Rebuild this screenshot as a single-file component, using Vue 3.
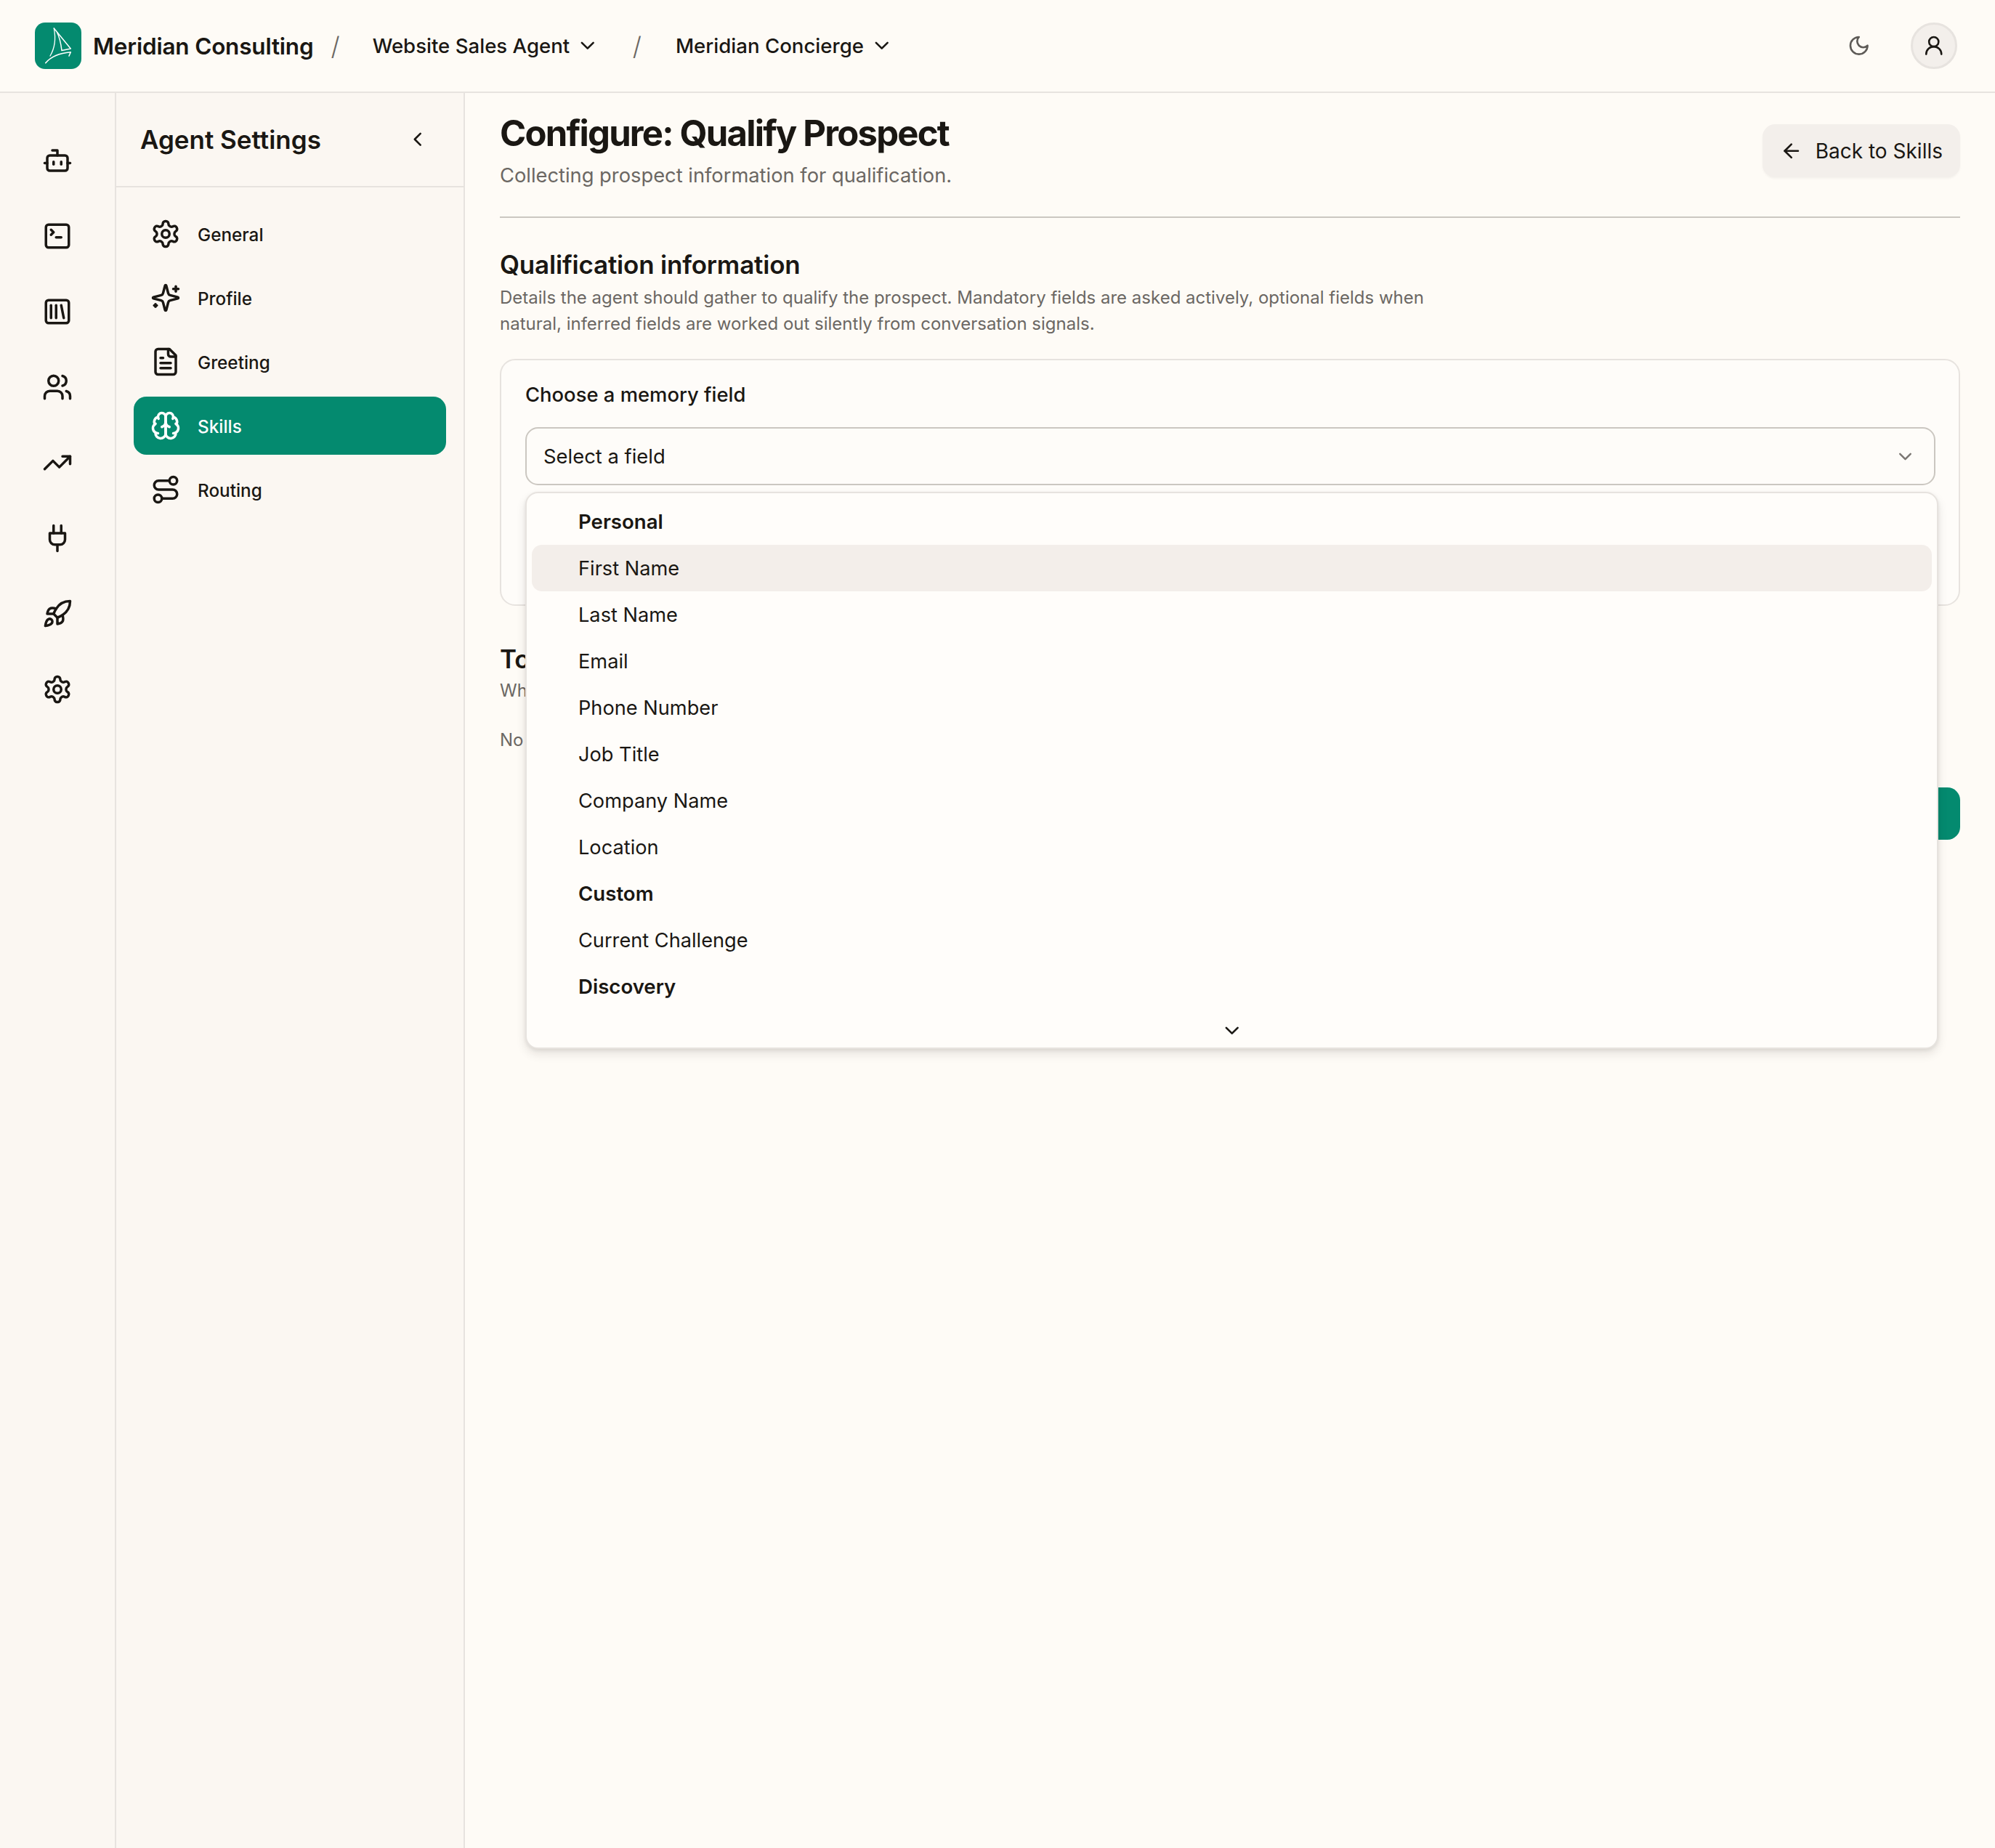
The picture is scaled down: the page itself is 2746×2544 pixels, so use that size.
<template>
  <div class="page">
    <header class="topbar">
      <div class="logo">
        <svg viewBox="0 0 64 64" width="64" height="64" stroke-linecap="round" stroke-linejoin="round">
          <path d="M26.3 8 C29 22 27 36 21 46" stroke-width="1.3" />
          <path d="M26.3 8 L49.3 36 L37 38.5 C36 30 34 20 30 12.5" stroke-width="1.5" />
          <path d="M14.7 55.7 C22 47 34 42 49.3 40.7 L47 46" stroke-width="1.6" />
        </svg>
      </div>
      <span class="brand">Meridian Consulting</span>
      <span class="slash">/</span>
      <button class="crumb">
        Website Sales Agent
        <svg class="chev" viewBox="0 0 24 24"><path d="m6 9 6 6 6-6" /></svg>
      </button>
      <span class="slash second">/</span>
      <button class="crumb">
        Meridian Concierge
        <svg class="chev" viewBox="0 0 24 24"><path d="m6 9 6 6 6-6" /></svg>
      </button>
      <div class="top-right">
        <svg class="moon" viewBox="0 0 24 24"><path d="M12 3a6 6 0 0 0 9 9 9 9 0 1 1-9-9Z" /></svg>
        <div class="avatar">
          <svg viewBox="0 0 24 24"><circle cx="12" cy="8" r="5" /><path d="M20 21a8 8 0 0 0-16 0" /></svg>
        </div>
      </div>
    </header>

    <div class="body">
      <nav class="rail">
        <div v-for="icon in railIcons" :key="icon.name" class="rail-item">
          <svg class="icon" viewBox="0 0 24 24">
            <circle v-for="c in icon.circles" :key="c.join()" :cx="c[0]" :cy="c[1]" :r="c[2]" />
            <rect v-for="r in icon.rects" :key="r.join()" :x="r[0]" :y="r[1]" :width="r[2]" :height="r[3]" rx="2" />
            <path v-for="d in icon.paths" :key="d" :d="d" />
          </svg>
        </div>
      </nav>

      <aside class="sidebar">
        <div class="sidebar-head">
          <h2>Agent Settings</h2>
          <svg class="collapse" viewBox="0 0 24 24"><path d="m15 18-6-6 6-6" /></svg>
        </div>
        <div class="sidebar-nav">
          <a v-for="item in navItems" :key="item.label" :class="['nav-item', { active: item.label === 'Skills' }]">
            <svg class="icon" viewBox="0 0 24 24">
              <circle v-for="c in item.circles" :key="c.join()" :cx="c[0]" :cy="c[1]" :r="c[2]" />
              <path v-for="d in item.paths" :key="d" :d="d" />
            </svg>
            <span>{{ item.label }}</span>
          </a>
        </div>
      </aside>

      <main class="main">
        <div class="page-head">
          <div>
            <h1>Configure: Qualify Prospect</h1>
            <p class="subtitle">Collecting prospect information for qualification.</p>
          </div>
          <button class="back">
            <svg viewBox="0 0 24 24"><path d="m12 19-7-7 7-7" /><path d="M19 12H5" /></svg>
            Back to Skills
          </button>
        </div>

        <section class="section">
          <h3>Qualification information</h3>
          <p class="desc">Details the agent should gather to qualify the prospect. Mandatory fields are asked actively, optional fields when natural, inferred fields are worked out silently from conversation signals.</p>
          <div class="card">
            <label>Choose a memory field</label>
            <div class="select-wrap">
              <div class="select">
                <span>Select a field</span>
                <svg viewBox="0 0 24 24"><path d="m6 9 6 6 6-6" /></svg>
              </div>
              <div class="dropdown">
                <div v-for="row in fieldRows" :key="row.label" :class="['row', { group: row.group, hovered: row.label === 'First Name' }]">{{ row.label }}</div>
                <div class="scroll-down">
                  <svg viewBox="0 0 24 24"><path d="m6 9 6 6 6-6" /></svg>
                </div>
              </div>
            </div>
          </div>
        </section>

        <section class="section tools">
          <h3>Tools</h3>
          <p class="desc">Which tools the agent can use while running this skill.</p>
          <p class="desc none">No tools selected.</p>
        </section>

        <div class="actions">
          <button class="save">Save changes</button>
        </div>
      </main>
    </div>
  </div>
</template>

<script setup>
const settingsPath = 'M12.22 2h-.44a2 2 0 0 0-2 2v.18a2 2 0 0 1-1 1.73l-.43.25a2 2 0 0 1-2 0l-.15-.08a2 2 0 0 0-2.73.73l-.22.38a2 2 0 0 0 .73 2.73l.15.1a2 2 0 0 1 1 1.72v.51a2 2 0 0 1-1 1.74l-.15.09a2 2 0 0 0-.73 2.73l.22.38a2 2 0 0 0 2.73.73l.15-.08a2 2 0 0 1 2 0l.43.25a2 2 0 0 1 1 1.73V20a2 2 0 0 0 2 2h.44a2 2 0 0 0 2-2v-.18a2 2 0 0 1 1-1.73l.43-.25a2 2 0 0 1 2 0l.15.08a2 2 0 0 0 2.73-.73l.22-.39a2 2 0 0 0-.73-2.73l-.15-.08a2 2 0 0 1-1-1.74v-.5a2 2 0 0 1 1-1.74l.15-.09a2 2 0 0 0 .73-2.73l-.22-.38a2 2 0 0 0-2.73-.73l-.15.08a2 2 0 0 1-2 0l-.43-.25a2 2 0 0 1-1-1.73V4a2 2 0 0 0-2-2z'

const railIcons = [
  { name: 'bot', rects: [[4, 8, 16, 12]], paths: ['M12 8V4H8', 'M2 14h2', 'M20 14h2', 'M15 13v2', 'M9 13v2'] },
  { name: 'terminal', rects: [[3, 3, 18, 18]], paths: ['m7 11 2-2-2-2', 'M11 13h4'] },
  { name: 'library', rects: [[3, 3, 18, 18]], paths: ['M7 7v10', 'M11 7v10', 'm15 7 2 10'] },
  { name: 'users', circles: [[9, 7, 4]], paths: ['M16 21v-2a4 4 0 0 0-4-4H6a4 4 0 0 0-4 4v2', 'M16 3.128a4 4 0 0 1 0 7.744', 'M22 21v-2a4 4 0 0 0-3-3.87'] },
  { name: 'trending', paths: ['M16 7h6v6', 'm22 7-8.5 8.5-5-5L2 17'] },
  { name: 'plug', paths: ['M12 22v-5', 'M9 8V2', 'M15 8V2', 'M18 8v5a4 4 0 0 1-4 4h-4a4 4 0 0 1-4-4V8Z'] },
  { name: 'rocket', paths: ['M4.5 16.5c-1.5 1.26-2 5-2 5s3.74-.5 5-2c.71-.84.7-2.13-.09-2.91a2.18 2.18 0 0 0-2.91-.09z', 'm12 15-3-3a22 22 0 0 1 2-3.95A12.88 12.88 0 0 1 22 2c0 2.72-.78 7.5-6 11a22.35 22.35 0 0 1-4 2z', 'M9 12H4s.55-3.03 2-4c1.62-1.08 5 0 5 0', 'M12 15v5s3.03-.55 4-2c1.08-1.62 0-5 0-5'] },
  { name: 'settings', circles: [[12, 12, 3]], paths: [settingsPath] }
]

const navItems = [
  { label: 'General', circles: [[12, 12, 3]], paths: [settingsPath] },
  { label: 'Profile', paths: ['M9.937 15.5A2 2 0 0 0 8.5 14.063l-6.135-1.582a.5.5 0 0 1 0-.962L8.5 9.936A2 2 0 0 0 9.937 8.5l1.582-6.135a.5.5 0 0 1 .963 0L14.063 8.5A2 2 0 0 0 15.5 9.937l6.135 1.581a.5.5 0 0 1 0 .964L15.5 14.063a2 2 0 0 0-1.437 1.437l-1.582 6.135a.5.5 0 0 1-.963 0z', 'M20 3v4', 'M22 5h-4', 'M4 17v2', 'M5 18H3'] },
  { label: 'Greeting', paths: ['M15 2H6a2 2 0 0 0-2 2v16a2 2 0 0 0 2 2h12a2 2 0 0 0 2-2V7Z', 'M14 2v4a2 2 0 0 0 2 2h4', 'M10 9H8', 'M16 13H8', 'M16 17H8'] },
  { label: 'Skills', paths: ['M12 5a3 3 0 1 0-5.997.125 4 4 0 0 0-2.526 5.77 4 4 0 0 0 .556 6.588A4 4 0 1 0 12 18Z', 'M12 5a3 3 0 1 1 5.997.125 4 4 0 0 1 2.526 5.77 4 4 0 0 1-.556 6.588A4 4 0 1 1 12 18Z', 'M15 13a4.5 4.5 0 0 1-3-4 4.5 4.5 0 0 1-3 4', 'M17.599 6.5a3 3 0 0 0 .399-1.375', 'M6.003 5.125A3 3 0 0 0 6.401 6.5', 'M3.477 10.896a4 4 0 0 1 .585-.396', 'M19.938 10.5a4 4 0 0 1 .585.396', 'M6 18a4 4 0 0 1-1.967-.516', 'M19.967 17.484A4 4 0 0 1 18 18'] },
  { label: 'Routing', circles: [[6, 19, 3], [18, 5, 3]], paths: ['M9 19h8.5a3.5 3.5 0 0 0 0-7h-11a3.5 3.5 0 0 1 0-7H15'] }
]

const fieldRows = [
  { label: 'Personal', group: true },
  { label: 'First Name' },
  { label: 'Last Name' },
  { label: 'Email' },
  { label: 'Phone Number' },
  { label: 'Job Title' },
  { label: 'Company Name' },
  { label: 'Location' },
  { label: 'Custom', group: true },
  { label: 'Current Challenge' },
  { label: 'Discovery', group: true }
]
</script>

<style>
html,
body {
  margin: 0;
  background: #fefbf6;
}
</style>

<style scoped>
* {
  box-sizing: border-box;
}

svg {
  fill: none;
  stroke: currentColor;
  stroke-width: 2;
  stroke-linecap: round;
  stroke-linejoin: round;
  flex-shrink: 0;
}

.page {
  width: 2746px;
  height: 2544px;
  display: flex;
  flex-direction: column;
  overflow: hidden;
  font-family: Inter, "Liberation Sans", sans-serif;
  color: #1a1713;
  background: #fefbf6;
}

button {
  font-family: inherit;
  color: inherit;
  border: none;
  background: none;
  padding: 0;
}

.topbar {
  height: 128px;
  flex-shrink: 0;
  display: flex;
  align-items: center;
  padding: 0 52px 0 48px;
  border-bottom: 2px solid #e7e3df;
}

.logo {
  width: 64px;
  height: 64px;
  border-radius: 14px;
  background: #048a6f;
  flex-shrink: 0;
}

.logo svg {
  display: block;
  stroke: #fff;
}

.brand {
  margin-left: 16px;
  font-size: 31.5px;
  font-weight: 600;
  letter-spacing: -0.2px;
}

.slash {
  margin-left: 24px;
  font-size: 35px;
  color: #6b6763;
  font-weight: 300;
}

.slash.second {
  margin-left: 46px;
}

.crumb {
  display: flex;
  align-items: center;
  gap: 9px;
  margin-left: 45px;
  font-size: 27.6px;
  font-weight: 500;
}

.crumb + .slash + .crumb {
  margin-left: 47px;
}

.chev {
  width: 31.5px;
  height: 31.5px;
}

.top-right {
  margin-left: auto;
  display: flex;
  align-items: center;
  gap: 56px;
}

.moon {
  width: 31.5px;
  height: 31.5px;
  color: #5e5b57;
}

.avatar {
  width: 64px;
  height: 64px;
  border-radius: 50%;
  border: 3.5px solid #e7e3df;
  background: #f3efeb;
  display: flex;
  align-items: center;
  justify-content: center;
}

.avatar svg {
  width: 31.5px;
  height: 31.5px;
}

.body {
  flex: 1;
  display: flex;
  min-height: 0;
}

.rail {
  width: 160px;
  flex-shrink: 0;
  padding-top: 41px;
  display: flex;
  flex-direction: column;
  align-items: center;
  background: #fbf7f2;
  border-right: 2px solid #e7e3df;
}

.rail-item {
  height: 104px;
  display: flex;
  align-items: center;
  justify-content: center;
}

.icon {
  width: 42px;
  height: 42px;
}

.sidebar {
  width: 480px;
  flex-shrink: 0;
  background: #fbf7f2;
  border-right: 2px solid #e7e3df;
}

.sidebar-head {
  height: 130px;
  display: flex;
  align-items: center;
  justify-content: space-between;
  padding: 0 48px 0 33px;
  border-bottom: 2px solid #e7e3df;
}

.sidebar-head h2 {
  margin: 0;
  font-size: 35px;
  font-weight: 600;
}

.collapse {
  width: 31.5px;
  height: 31.5px;
}

.sidebar-nav {
  padding: 24px;
  display: flex;
  flex-direction: column;
  gap: 8px;
}

.nav-item {
  height: 80px;
  display: flex;
  align-items: center;
  gap: 23px;
  padding-left: 23px;
  border-radius: 17.5px;
  font-size: 24.3px;
  font-weight: 500;
}

.nav-item span {
  padding-top: 1px;
}

.nav-item.active {
  background: #048a6f;
  color: #fff;
}

.main {
  flex: 1;
  min-width: 0;
  padding: 26px 48px 0;
}

.page-head {
  display: flex;
  justify-content: space-between;
  align-items: center;
  padding-bottom: 35px;
  border-bottom: 2px solid #cbc7c1;
}

.page-head h1 {
  margin: 0;
  font-size: 49px;
  font-weight: 700;
  line-height: 60px;
  letter-spacing: -1.8px;
}

.subtitle {
  margin: 7px 0 0;
  font-size: 27.3px;
  line-height: 42px;
  color: #6b6763;
}

.back {
  height: 73px;
  margin-bottom: 2px;
  display: flex;
  align-items: center;
  gap: 17px;
  padding: 0 24px;
  border-radius: 17.5px;
  background: #f3efeb;
  font-size: 28px;
  box-shadow: 0 2px 3px rgba(26, 23, 19, 0.04);
}

.back svg {
  width: 31.5px;
  height: 31.5px;
}

.section h3 {
  margin: 0;
  font-size: 35px;
  font-weight: 600;
  line-height: 44px;
  letter-spacing: -0.2px;
}

.section {
  padding-top: 42px;
}

.desc {
  margin: 6px 0 0;
  font-size: 24px;
  line-height: 36px;
  color: #6b6763;
  max-width: 1290px;
}

.card {
  margin-top: 30px;
  height: 340px;
  padding: 30px 32px 30px 33px;
  background: #fefcf9;
  border: 2px solid #e7e3df;
  border-radius: 21px;
}

.card label {
  display: block;
  font-size: 27.4px;
  font-weight: 500;
  line-height: 34px;
}

.select-wrap {
  position: relative;
  margin-top: 28px;
}

.select {
  height: 80px;
  display: flex;
  align-items: center;
  justify-content: space-between;
  padding: 0 25px 0 23px;
  border: 2px solid #cbc7c1;
  border-radius: 17.5px;
  font-size: 27.4px;
}

.select svg {
  width: 29px;
  height: 29px;
  color: #7a7672;
}

.dropdown {
  position: absolute;
  z-index: 10;
  top: 89px;
  left: 0;
  right: -4px;
  padding: 7px;
  background: #fffdfa;
  border: 2px solid #e7e3df;
  border-radius: 17.5px;
  box-shadow: 0 7px 14px rgba(26, 23, 19, 0.1), 0 2px 5px rgba(26, 23, 19, 0.08);
}

.row {
  height: 64px;
  display: flex;
  align-items: center;
  padding-left: 64px;
  border-radius: 14px;
  font-size: 27.2px;
}

.row.group {
  font-size: 27.6px;
  font-weight: 600;
}

.row.hovered {
  background: #f3eeea;
}

.scroll-down {
  height: 45px;
  padding-top: 12px;
  display: flex;
  align-items: center;
  justify-content: center;
}

.scroll-down svg {
  width: 31.5px;
  height: 31.5px;
}

.tools {
  padding-top: 51px;
}

.tools .desc {
  margin-top: 3.5px;
}

.tools .desc.none {
  margin-top: 32px;
}

.actions {
  display: flex;
  justify-content: flex-end;
  margin-top: 47px;
}

.save {
  height: 72px;
  padding: 0 32px;
  border-radius: 17.5px;
  background: #048a6f;
  color: #fff;
  font-size: 26px;
  font-weight: 500;
}
</style>
